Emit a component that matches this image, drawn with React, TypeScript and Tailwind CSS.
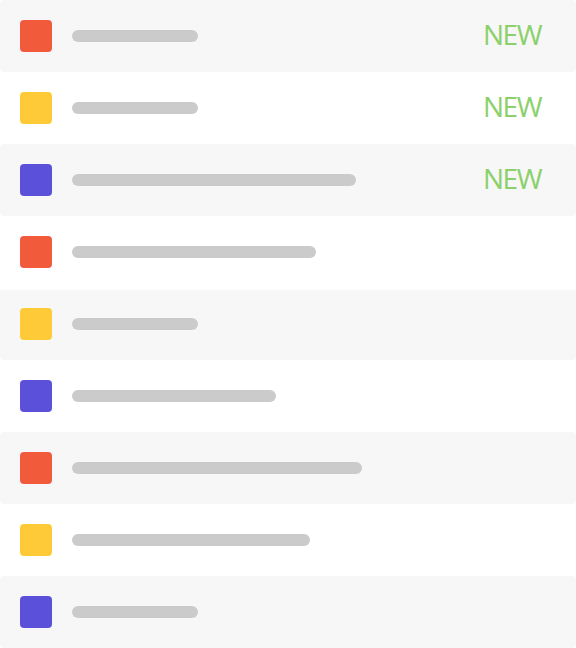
import React from "react";

const rows = [
  { c: "bg-[#f25a3c]", w: 126, n: true },
  { c: "bg-[#ffca38]", w: 126, n: true },
  { c: "bg-[#5b50d9]", w: 284, n: true },
  { c: "bg-[#f25a3c]", w: 244, n: false },
  { c: "bg-[#ffca38]", w: 126, n: false },
  { c: "bg-[#5b50d9]", w: 204, n: false },
  { c: "bg-[#f25a3c]", w: 290, n: false },
  { c: "bg-[#ffca38]", w: 238, n: false },
  { c: "bg-[#5b50d9]", w: 126, n: false },
];

export default function App() {
  return (
    <div className="w-[576px] h-[648px] bg-white flex flex-col" style={{ fontFamily: '"Open Sans", sans-serif' }}>
      {rows.map((r, i) => (
        <div
          key={i}
          className={`h-[72px] flex items-center pl-5 pr-[35px] rounded-[4px] ${i % 2 === 0 ? "bg-[#f7f7f7]" : "bg-white"} ${i === 4 ? "border-t-2 border-white pb-[2px]" : ""}`}
        >
          <div className={`w-8 h-8 rounded-[4px] ${r.c}`} />
          <div className="ml-5 h-3 rounded-[6px] bg-[#cbcbcb]" style={{ width: r.w }} />
          <div className="flex-1" />
          {r.n && (
            <span className="mb-[4px] text-[28px] leading-none text-[#8bd06a] tracking-[-1.5px]">NEW</span>
          )}
        </div>
      ))}
    </div>
  );
}
